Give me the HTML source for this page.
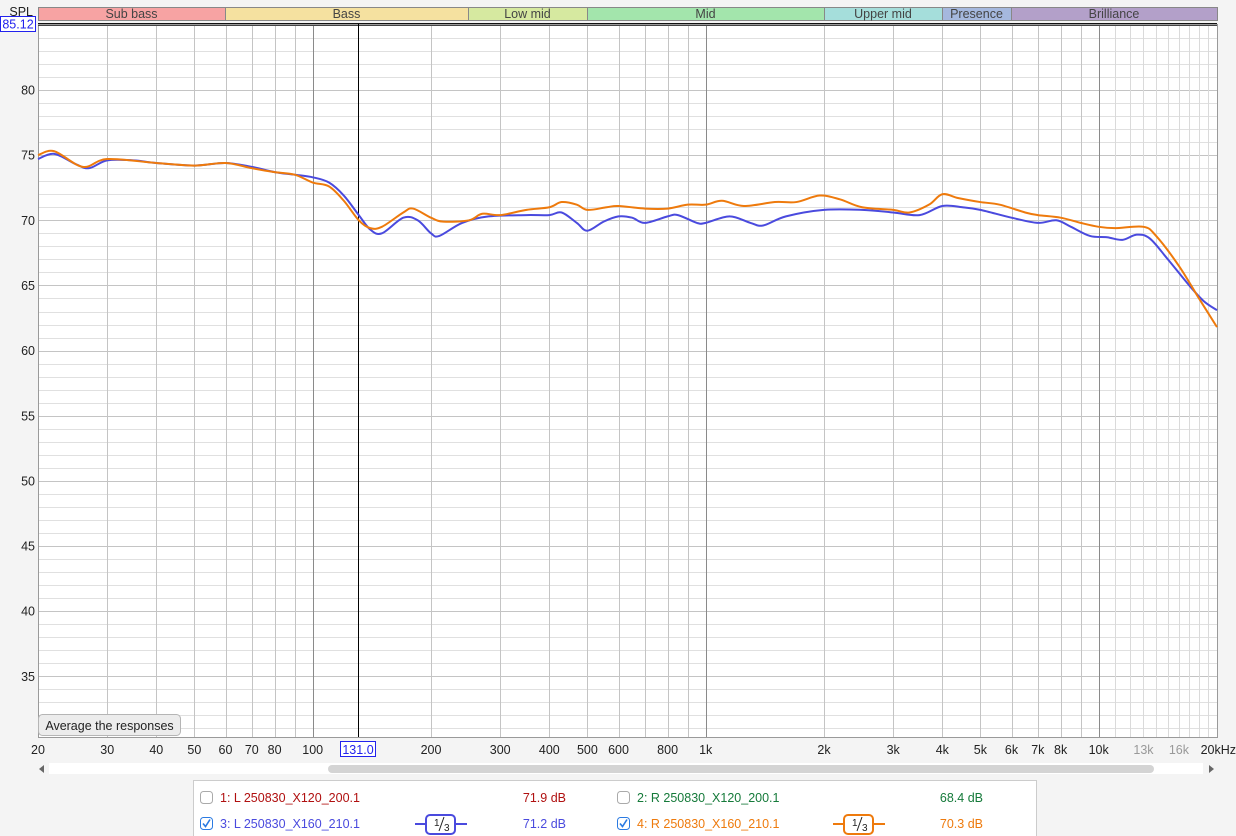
<!DOCTYPE html>
<html><head><meta charset="utf-8"><style>
body{margin:0;background:#f4f4f4;width:1236px;height:836px;overflow:hidden;font-family:"Liberation Sans",sans-serif}
svg{position:absolute;left:0;top:0}
</style></head><body>
<svg id="s" width="1236" height="836" xmlns="http://www.w3.org/2000/svg" font-family="Liberation Sans, sans-serif"></svg>
<script>
const X0=38,X1=1217,PPD=(X1-X0)/3,Y80=90,PDB=13.03,YT=24,YB=737;
const fx=f=>X0+PPD*Math.log10(f/20);
const dy=d=>Y80+(80-d)*PDB;
let o='';
o+=`<rect x="${X0}" y="${YT}" width="${X1-X0}" height="${YB-YT}" fill="#fff"/>`;
for(let d=30;d<=85;d++){const y=Math.round(dy(d))+.5;if(y<YT+2||y>YB)continue;o+=`<line x1="${X0}" x2="${X1}" y1="${y}" y2="${y}" stroke="${d%5==0?'#c4c4c4':'#e0e0e0'}" stroke-width="1"/>`;}
let fs=[];
for(let dec of [10,100,1000,10000])for(let m=1;m<10;m++){let f=m*dec;if(f>=20&&f<=20000)fs.push(f);}
fs.forEach(f=>{const x=Math.round(fx(f))+.5;let c='#c4c4c4';if(f==100||f==1000||f==10000)c='#8a8a8a';o+=`<line x1="${x}" x2="${x}" y1="${YT}" y2="${YB}" stroke="${c}"/>`;});
for(let f=11000;f<20000;f+=1000){if(f%10000==0)continue;const x=Math.round(fx(f))+.5;o+=`<line x1="${x}" x2="${x}" y1="${YT}" y2="${YB}" stroke="#dadada"/>`;}
o+=`<rect x="${X0}.5" y="${YT}.5" width="${X1-X0}" height="${YB-YT}" fill="none" stroke="#9a9a9a"/>`;
o+=`<line x1="${X0}" x2="${X1}" y1="23.5" y2="23.5" stroke="#111"/><line x1="${X0}" x2="${X1}" y1="25.5" y2="25.5" stroke="#444"/>`;
const bands=[[38,225,'#f7a3a3','Sub bass'],[225,468,'#f5e1a0','Bass'],[468,587,'#d6e9a0','Low mid'],[587,824,'#a3e5ac','Mid'],[824,942,'#a5dedb','Upper mid'],[942,1011,'#a5b8de','Presence'],[1011,1217,'#b3a0c9','Brilliance']];
bands.forEach(b=>{o+=`<rect x="${b[0]+.5}" y="7.5" width="${b[1]-b[0]}" height="13" fill="${b[2]}" stroke="#888"/><text x="${(b[0]+b[1])/2}" y="18" font-size="12.5" text-anchor="middle" fill="#444">${b[3]}</text>`;});
for(let d=35;d<=80;d+=5)o+=`<text x="35" y="${dy(d)+4.5}" font-size="12.5" text-anchor="end" fill="#222">${d}</text>`;
o+=`<text x="33" y="16" font-size="12.5" text-anchor="end" fill="#222">SPL</text>`;
o+=`<rect x="0.5" y="16.5" width="35" height="15" fill="#fff" stroke="#2222ee"/><text x="18" y="28.5" font-size="12.5" text-anchor="middle" fill="#2222ee">85.12</text>`;
const xl=[[20,'20'],[30,'30'],[40,'40'],[50,'50'],[60,'60'],[70,'70'],[80,'80'],[100,'100'],[200,'200'],[300,'300'],[400,'400'],[500,'500'],[600,'600'],[800,'800'],[1000,'1k'],[2000,'2k'],[3000,'3k'],[4000,'4k'],[5000,'5k'],[6000,'6k'],[7000,'7k'],[8000,'8k'],[10000,'10k'],[13000,'13k'],[16000,'16k'],[20000,'20kHz']];
xl.forEach(l=>{let x=fx(l[0]);let a='middle';if(l[0]==20000){x=1236;a='end';}let c=(l[0]==13000||l[0]==16000)?'#999':'#222';o+=`<text x="${x}" y="754" font-size="12.5" text-anchor="${a}" fill="${c}">${l[1]}</text>`;});
o+=`<line x1="358.5" x2="358.5" y1="${YT}" y2="${YB}" stroke="#000"/>`;
o+=`<rect x="340.5" y="741.5" width="35" height="15" fill="#fff" stroke="#2222ee"/><text x="358" y="754" font-size="12.5" text-anchor="middle" fill="#2222ee">131.0</text>`;
function path(pts){const p=pts.map(q=>[fx(q[0]),dy(q[1])]);let d=`M${p[0][0]},${p[0][1]}`;for(let i=0;i<p.length-1;i++){const a=p[i-1]||p[i],b=p[i],c=p[i+1],e=p[i+2]||c;d+=` C${b[0]+(c[0]-a[0])/6},${b[1]+(c[1]-a[1])/6} ${c[0]-(e[0]-b[0])/6},${c[1]-(e[1]-b[1])/6} ${c[0]},${c[1]}`;}return d;}
const blue=[[20,74.7],[22,75.1],[25,74.3],[27,74.0],[30,74.6],[35,74.6],[40,74.4],[50,74.2],[60,74.4],[70,74.1],[80,73.7],[90,73.5],[100,73.3],[110,72.9],[120,71.9],[131,70.4],[140,69.3],[150,69.0],[170,70.2],[185,70.0],[200,69.0],[210,68.8],[240,69.8],[280,70.3],[350,70.4],[400,70.4],[430,70.6],[470,69.8],[500,69.2],[550,69.9],[600,70.3],[650,70.2],[700,69.8],[800,70.3],[850,70.4],[950,69.8],[1000,69.8],[1150,70.3],[1300,69.8],[1400,69.6],[1600,70.3],[2000,70.8],[2500,70.8],[3000,70.6],[3500,70.4],[4000,71.1],[4500,71.0],[5000,70.8],[6000,70.2],[7000,69.8],[7800,70.0],[8500,69.5],[9500,68.8],[10500,68.7],[11500,68.5],[12500,68.9],[13500,68.6],[15000,67],[17000,65],[18500,63.8],[20000,63.1]];
const orange=[[20,75.0],[22,75.3],[26,74.1],[30,74.7],[40,74.4],[50,74.2],[60,74.4],[70,74.0],[80,73.7],[90,73.5],[100,72.9],[110,72.6],[120,71.5],[131,70.0],[140,69.4],[150,69.5],[170,70.6],[180,70.9],[200,70.2],[215,69.9],[250,70.0],[270,70.5],[300,70.4],[350,70.8],[400,71.0],[430,71.4],[470,71.2],[500,70.8],[560,71.0],[600,71.1],[700,70.9],[800,70.9],[900,71.2],[1000,71.2],[1100,71.5],[1250,71.1],[1500,71.4],[1700,71.4],[1950,71.9],[2200,71.6],[2500,71.0],[3000,70.8],[3300,70.6],[3700,71.2],[4000,72.0],[4400,71.7],[5000,71.4],[5600,71.2],[6500,70.6],[7000,70.4],[8000,70.2],[9000,69.8],[10000,69.5],[11000,69.4],[13000,69.5],[14000,68.8],[16000,66.5],[18000,64.0],[20000,61.8]];
o+=`<path d="${path(blue)}" fill="none" stroke="#4a4ade" stroke-width="2"/>`;
o+=`<path d="${path(orange)}" fill="none" stroke="#ee7a0c" stroke-width="2"/>`;
o+=`<rect x="38.5" y="714.5" width="142" height="21" rx="4" fill="#ececec" stroke="#b5b5b5"/><text x="109.5" y="730" font-size="12.5" text-anchor="middle" fill="#222">Average the responses</text>`;
o+=`<rect x="49" y="763" width="1154" height="11" fill="#fff"/><rect x="328" y="765" width="826" height="8" rx="4" fill="#d4d4d4"/>`;
o+=`<path d="M39,769 l5,-4 v8z" fill="#666"/><path d="M1214,769 l-5,-4 v8z" fill="#666"/>`;
o+=`<rect x="193.5" y="780.5" width="843" height="60" fill="#fff" stroke="#ccc"/>`;
const cb=(x,y,chk)=>`<rect x="${x}.5" y="${y}.5" width="12" height="12" rx="3" fill="#fff" stroke="${chk?'#2a7ae2':'#aaa'}"/>`+(chk?`<path d="M${x+3},${y+6.5} l2.5,3 l4.5,-7" fill="none" stroke="#2a7ae2" stroke-width="1.6"/>`:'');
o+=cb(200,791,false)+`<text x="220" y="802" font-size="12.5" fill="#b01010">1: L 250830_X120_200.1</text><text x="566" y="802" font-size="12.5" text-anchor="end" fill="#b01010">71.9 dB</text>`;
o+=cb(617,791,false)+`<text x="637" y="802" font-size="12.5" fill="#157a3a">2: R 250830_X120_200.1</text><text x="983" y="802" font-size="12.5" text-anchor="end" fill="#157a3a">68.4 dB</text>`;
o+=cb(200,817,true)+`<text x="220" y="828" font-size="12.5" fill="#4a4ade">3: L 250830_X160_210.1</text><text x="566" y="828" font-size="12.5" text-anchor="end" fill="#4a4ade">71.2 dB</text>`;
o+=cb(617,817,true)+`<text x="637" y="828" font-size="12.5" fill="#ee7a0c">4: R 250830_X160_210.1</text><text x="983" y="828" font-size="12.5" text-anchor="end" fill="#ee7a0c">70.3 dB</text>`;
const th=(x,c)=>`<line x1="${x}" x2="${x+52}" y1="824" y2="824" stroke="${c}" stroke-width="2"/><rect x="${x+11}" y="815" width="29" height="19" rx="4" fill="#fff" stroke="${c}" stroke-width="2"/><text x="${x+19}" y="826" font-size="10" fill="#222">1</text><line x1="${x+29}" y1="817" x2="${x+24}" y2="831" stroke="#222"/><text x="${x+29}" y="831" font-size="10" fill="#222">3</text>`;
o+=th(415,'#4a4ade')+th(833,'#ee7a0c');
document.getElementById('s').innerHTML=o;
</script>
</body></html>
